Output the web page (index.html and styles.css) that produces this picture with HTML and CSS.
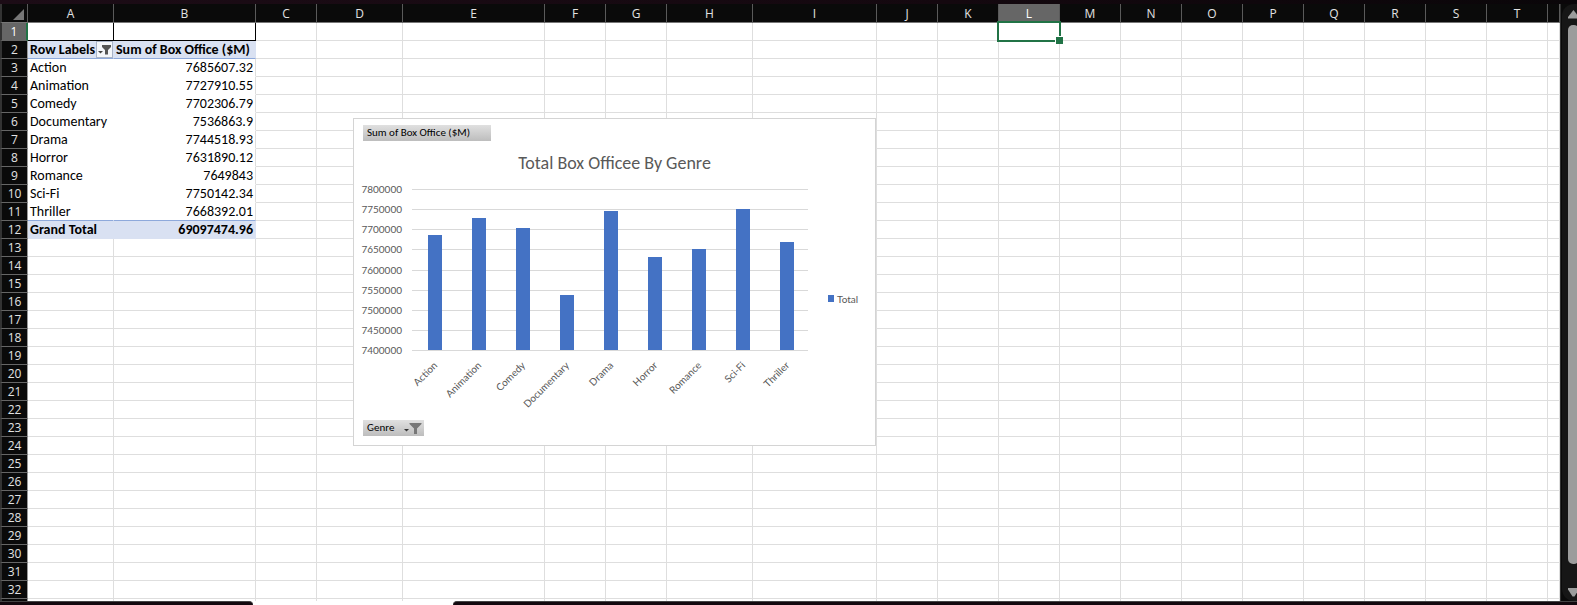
FILE: index.html
```
<!DOCTYPE html>
<html lang="en">
<head>
<meta charset="utf-8">
<title>Box Office by Genre</title>
<link rel="stylesheet" href="styles.css">
</head>
<body>
<div class="app">
  <div class="workspace">
    <main class="sheet">
      <table class="grid">
        <colgroup id="cols"></colgroup>
        <thead><tr id="letters"></tr></thead>
        <tbody id="rows"></tbody>
      </table>
      <section class="chart" aria-label="Total Box Officee By Genre">
        <button class="field-button field-value" type="button">Sum of Box Office ($M)</button>
        <h2 class="chart-title">Total Box Officee By Genre</h2>
        <div class="chart-body">
          <svg class="plot" width="464" height="230" viewBox="-4 0 464 230" role="img" aria-label="Bar chart of box office by genre" id="plot"></svg>
          <div class="legend"><span class="swatch"></span>Total</div>
        </div>
        <button class="field-button field-axis" type="button">Genre
          <svg class="axis-icon" width="19" height="14" viewBox="0 0 19 14" aria-hidden="true">
            <path d="M0 8h5L2.500 10.500z" fill="#333"/>
            <path d="M5.500 2h12v1l-4.500 4.500V13h-3V7.500L5.500 3z" fill="#777"/>
          </svg>
        </button>
      </section>
    </main>
    <div class="scrollbar" aria-hidden="true">
      <svg class="arrow" width="11" height="9" viewBox="0 0 11 9"><path d="M5.500 0L11 7v1.500H0V7z" fill="#9c9c9c"/></svg>
      <div class="thumb"></div>
      <svg class="arrow" width="11" height="9" viewBox="0 0 11 9"><path d="M0 0h11v1.500L6.500 8.500h-2L0 1.500z" fill="#9c9c9c"/></svg>
    </div>
  </div>
  <div class="tabs"><div class="tabs-left"></div><div class="tabs-active"></div><div class="tabs-right"></div></div>
</div>
<script src="script.js"></script>
</body>
</html>
```
FILE: styles.css
```
* { box-sizing: border-box; }
body {
  margin: 0;
  background: #0a0a0a;
  color: #000;
  font-family: Carlito, Lato, "Open Sans", sans-serif;
  font-size: 14px;
}
.app {
  display: flex;
  flex-direction: column;
  height: 100vh;
  padding-top: 4px;
  background: linear-gradient(90deg, #1c0c16, #14080f 60%, #0a0609);
  overflow: hidden;
}
.workspace {
  display: flex;
  flex: 1;
  min-height: 0;
  background: #0a0a0a;
}
.sheet {
  position: relative;
  flex: 1;
  min-width: 0;
  overflow: hidden;
  background: #fff;
  border-right: 1px solid #333;
}
.grid {
  width: 100%;
  table-layout: fixed;
  border-collapse: separate;
  border-spacing: 0;
}
.grid th, .grid td {
  height: 18px;
  padding: 0 2px;
  line-height: 17px;
  white-space: nowrap;
  border-right: 1px solid #dedede;
  border-bottom: 1px solid #dedede;
}
.grid thead th {
  height: 19px;
  padding-top: 1px;
  border-right-color: #5a5a5a;
  border-bottom-color: #777;
}
.grid .head {
  background: #0a0a0a;
  color: #e2e2e2;
  font-family: "Open Sans", "Noto Sans", sans-serif;
  font-size: 12px;
  font-weight: 400;
  text-align: center;
}
.grid .row-head {
  border-left: 2px solid #333;
  border-right-color: #999;
  border-bottom-color: #666;
}
.grid .corner { border-left: 2px solid #333; padding: 0; }
.corner-mark { display: block; margin: 4px 3px 2px auto; }
.grid .selected { background: #666; color: #fff; }
.grid .row-head.selected { border-right: 2px solid #217346; }
.grid .boxed { border-color: #000; }
.grid .pivot { border-right-color: transparent; border-bottom-color: transparent; }
.grid .pivot-last { border-right-color: #dedede; }
.grid .pivot-head { background: #d9e1f2; font-weight: 700; border-bottom-color: #8ea9db; border-right-color: #d9e1f2; }
.grid .pivot-end { border-bottom-color: #8ea9db; }
.grid .pivot-total { background: #d9e1f2; font-weight: 700; border-color: #d9e1f2; }
.grid .number { text-align: right; padding-right: 2px; }
.grid .anchor { position: relative; }
.filter {
  position: absolute;
  top: 0;
  right: 0;
  width: 17px;
  height: 17px;
  padding: 0;
  border: 1px solid #a9b4c8;
  background: #f4f6fa;
}
.filter svg { display: block; }
.cursor {
  position: absolute;
  top: -2px;
  left: -2px;
  width: 64px;
  height: 21px;
  border: 2px solid #217346;
}
.cursor::after {
  content: "";
  position: absolute;
  right: -4px;
  bottom: -4px;
  width: 7px;
  height: 7px;
  border: solid #fff;
  border-width: 1px 0 0 1px;
  background: #217346;
}
.chart {
  position: absolute;
  top: 114px;
  left: 353px;
  width: 523px;
  padding: 6px 9px 9px;
  border: 1px solid #d4d4d4;
  background: #fff;
  color: #595959;
}
.field-button {
  display: flex;
  align-items: center;
  justify-content: space-between;
  height: 16px;
  padding: 0 4px;
  border: 0;
  background: linear-gradient(#e0e0e0, #bdbdbd);
  color: #000;
  font-family: Carlito, Lato, sans-serif;
  font-size: 11px;
  line-height: 16px;
}
.field-value { width: 128px; }
.field-axis { width: 61px; padding-right: 1px; }
.axis-icon { flex: none; }
.chart-title {
  margin: 12px 0 8px;
  text-align: center;
  font-size: 18px;
  line-height: 20px;
  font-weight: 400;
}
.chart-body { display: flex; align-items: flex-start; height: 239px; }
.plot { flex: none; margin-left: -4px; font-family: Lato, sans-serif; font-size: 10px; }
.plot text { fill: #595959; }
.plot .tick { stroke: #d9d9d9; }
.plot .bar { fill: #4472c4; }
.legend {
  display: flex;
  align-items: center;
  gap: 3px;
  height: 235px;
  margin-left: 5px;
  font-family: Lato, sans-serif;
  font-size: 10px;
}
.swatch { width: 6px; height: 7px; background: #4472c4; }
.scrollbar {
  display: flex;
  flex-direction: column;
  align-items: flex-start;
  gap: 6px;
  width: 15px;
  margin-left: 1px;
  padding: 6px 0 4px 6px;
  background: #161616;
  border-radius: 12px 0 0 12px;
  overflow: hidden;
}
.arrow { flex: none; }
.thumb { width: 11px; flex: 1; margin-bottom: 18px; border-radius: 5px; background: #9c9c9c; }
.tabs { display: flex; height: 4px; background: #fff; }
.tabs-left, .tabs-right { background: #12080e; border-top: 1px solid #444; }
.tabs-left { width: 253px; border-top-right-radius: 4px; }
.tabs-active { width: 200px; }
.tabs-right { flex: 1; border-top-left-radius: 4px; }
```
FILE: script.js
```
const widths = [28, 86, 142, 61, 86, 142, 61, 61, 86, 124, 61, 61, 61, 61, 61, 61, 61, 61, 61, 61, 61];
const letters = "ABCDEFGHIJKLMNOPQRST".split("");
const genres = [
  ["Action", "7685607.32"], ["Animation", "7727910.55"], ["Comedy", "7702306.79"],
  ["Documentary", "7536863.9"], ["Drama", "7744518.93"], ["Horror", "7631890.12"],
  ["Romance", "7649843"], ["Sci-Fi", "7750142.34"], ["Thriller", "7668392.01"]
];
const filterIcon = '<button class="filter" type="button" aria-label="Filter row labels"><svg width="15" height="15" viewBox="0 0 15 15"><path d="M1 9h5L3.500 11.500z" fill="#444"/><path d="M5 3h9v2l-3 3v4.500H8V8L5 5z" fill="#555"/></svg></button>';

document.getElementById("cols").innerHTML =
  widths.map(w => `<col style="width:${w}px">`).join("") + "<col>";

document.getElementById("letters").innerHTML =
  '<th class="head corner"><svg class="corner-mark" width="11" height="11" viewBox="0 0 11 11"><path d="M11 0v11H0z" fill="#777"/></svg></th>' +
  letters.map(l => `<th class="head${l === "L" ? " selected" : ""}" scope="col">${l}</th>`).join("") +
  '<th class="head"></th>';

function pivotCells(n) {
  if (n === 1) return '<td class="boxed"></td><td class="boxed"></td>';
  if (n === 2) return `<td class="pivot-head anchor">Row Labels${filterIcon}</td><td class="pivot-head">Sum of Box Office ($M)</td>`;
  if (n === 12) return '<td class="pivot-total">Grand Total</td><td class="pivot-total number">69097474.96</td>';
  if (n > 12) return "<td></td><td></td>";
  const [name, value] = genres[n - 3];
  const end = n === 11 ? " pivot-end" : "";
  return `<td class="pivot${end}">${name}</td><td class="pivot pivot-last number${end}">${value}</td>`;
}

let body = "";
for (let n = 1; n <= 33; n++) {
  body += `<tr><th class="head row-head${n === 1 ? " selected" : ""}" scope="row">${n < 33 ? n : ""}</th>` + pivotCells(n);
  for (let c = 2; c <= 20; c++) {
    body += n === 1 && c === 11 ? '<td class="anchor"><div class="cursor"></div></td>' : "<td></td>";
  }
  body += "</tr>";
}
document.getElementById("rows").innerHTML = body;

/* Value axis runs from 7.4M to 7.8M. */
const top0 = 8, span = 161, left = 49, pitch = 44;
let plot = "";
for (let i = 0; i <= 8; i++) {
  const y = top0 + Math.round(i * span / 8);
  plot += `<line class="tick" x1="${left}" x2="445" y1="${y + 0.5}" y2="${y + 0.5}"/>`;
  plot += `<text x="39" y="${y + 4}" text-anchor="end">${7800000 - i * 50000}</text>`;
}
genres.forEach(([name, value], i) => {
  const h = Math.round((value - 7400000) / 400000 * span);
  const x = left + i * pitch + 16;
  plot += `<rect class="bar" x="${x}" y="${top0 + span - h}" width="14" height="${h}"/>`;
  plot += `<text transform="translate(${x + 10} ${top0 + span + 16}) rotate(-45)" text-anchor="end">${name}</text>`;
});
document.getElementById("plot").innerHTML = plot;
```
